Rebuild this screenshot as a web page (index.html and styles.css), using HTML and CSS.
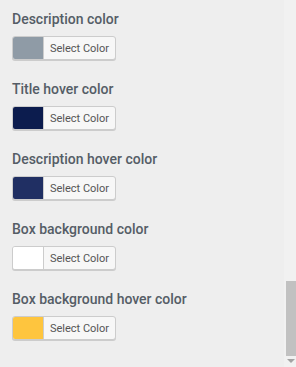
FILE: index.html
```html
<!DOCTYPE html>
<html>
<head>
<meta charset="utf-8">
<link rel="stylesheet" href="styles.css">
</head>
<body>
<div class="panel">
  <div class="field">
    <div class="label">Description color</div>
    <button class="picker"><span class="swatch" style="background:#8f9ba6"></span><span class="picker-text">Select Color</span></button>
  </div>
  <div class="field">
    <div class="label">Title hover color</div>
    <button class="picker"><span class="swatch" style="background:#0c1c4e"></span><span class="picker-text">Select Color</span></button>
  </div>
  <div class="field">
    <div class="label">Description hover color</div>
    <button class="picker"><span class="swatch" style="background:#202f63"></span><span class="picker-text">Select Color</span></button>
  </div>
  <div class="field">
    <div class="label">Box background color</div>
    <button class="picker"><span class="swatch" style="background:#ffffff"></span><span class="picker-text">Select Color</span></button>
  </div>
  <div class="field">
    <div class="label">Box background hover color</div>
    <button class="picker"><span class="swatch" style="background:#fec53e"></span><span class="picker-text">Select Color</span></button>
  </div>
</div>
<div class="scrollbar">
  <div class="thumb"></div>
  <div class="arrow"></div>
</div>
</body>
</html>
```
FILE: styles.css
```css
html, body {
  margin: 0;
  padding: 0;
  background: #eeeeee;
  height: 367px;
  overflow: hidden;
}
body {
  position: relative;
  font-family: Roboto, "Liberation Sans", sans-serif;
}
.panel {
  padding: 10px 0 0 12px;
  display: flex;
  flex-direction: column;
  gap: 20px;
}
.field {
  display: flex;
  flex-direction: column;
  gap: 8px;
}
.label {
  font-size: 14px;
  line-height: 18px;
  font-weight: 500;
  color: #555d66;
  white-space: nowrap;
}
.picker {
  display: flex;
  align-items: stretch;
  width: 104px;
  height: 24px;
  padding: 0;
  margin: 0;
  border: 1px solid #cccccc;
  border-radius: 3px;
  background: #f7f7f7;
  box-shadow: 0 1px 0 #cccccc;
  overflow: hidden;
  font-family: inherit;
}
.swatch {
  width: 30px;
  border-right: 1px solid #cccccc;
}
.picker-text {
  flex: 1;
  display: flex;
  align-items: center;
  justify-content: center;
  font-size: 11px;
  color: #555555;
}
.scrollbar {
  position: absolute;
  top: 0;
  right: 0;
  width: 12px;
  height: 367px;
  background: #f1f1f1;
}
.thumb {
  position: absolute;
  left: 2px;
  top: 281px;
  width: 10px;
  height: 75px;
  background: #c1c1c1;
}
.arrow {
  position: absolute;
  left: 3px;
  top: 359px;
  width: 0;
  height: 0;
  border-left: 4px solid transparent;
  border-right: 4px solid transparent;
  border-top: 4px solid #a3a3a3;
}
```
